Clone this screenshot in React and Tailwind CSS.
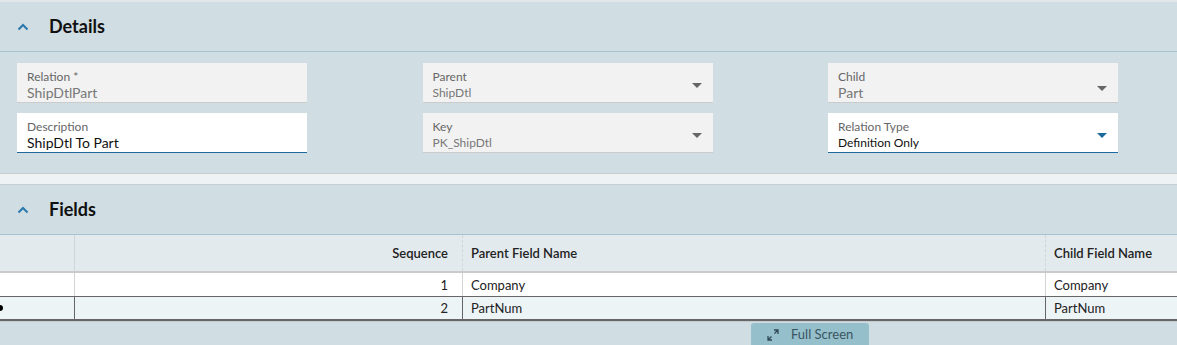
import React from "react";

const Chevron = () => (
  <svg width="12" height="8" viewBox="0 0 12 8" className="shrink-0">
    <path d="M1.5 6.5 L6 2 L10.5 6.5" fill="none" stroke="#2a78ad" strokeWidth="2" />
  </svg>
);

const Caret = ({ color }) => (
  <svg width="10" height="5" viewBox="0 0 10 5" className="shrink-0">
    <path d="M0 0 L10 0 L5 5 Z" fill={color} />
  </svg>
);

const Field = ({ label, value, enabled, dropdown, big, caretTop = "mt-[2px]" }) => (
  <div
    className={`h-[40px] w-[290px] flex items-center pl-[10px] pr-[10px] pt-[4px] ${
      enabled ? "bg-white border-b border-[#1f6a9c]" : "bg-[#f2f2f2] border-b border-[#cbcbcb]"
    }`}
  >
    <div className="flex-1 flex flex-col leading-none">
      <span className="text-[12px] text-[#666] leading-[15px]">{label}</span>
      <span className={`${big ? "text-[14px]" : "text-[12px]"} leading-[17px] ${enabled ? "text-[#111]" : "text-[#777]"}`}>
        {value}
      </span>
    </div>
    {dropdown && (
      <div className={`mr-[1px] ${caretTop}`}>
        <Caret color={enabled ? "#1b6a9b" : "#666"} />
      </div>
    )}
  </div>
);

const SectionHeader = ({ title }) => (
  <div className="h-[50px] flex items-center border-b border-[#a7c3d0]">
    <div className="w-[49px] pl-[17px] flex items-center">
      <Chevron />
    </div>
    <span className="text-[18px] font-bold text-[#111]">{title}</span>
  </div>
);

const ExpandIcon = () => (
  <svg width="12" height="12" viewBox="0 0 12 12" className="shrink-0">
    <path d="M7 1 H11 V5 M11 1 L7.5 4.5" fill="none" stroke="#2f4a55" strokeWidth="1.3" />
    <path d="M1 7 V11 H5 M1 11 L4.5 7.5" fill="none" stroke="#2f4a55" strokeWidth="1.3" />
  </svg>
);

export default function App() {
  return (
    <div
      className="w-[1177px] h-[345px] overflow-hidden bg-[#d0dde2] border-t-2 border-[#e2e6e8] text-[#333]"
      style={{ fontFamily: "Lato, 'Noto Sans', sans-serif" }}
    >
      <SectionHeader title="Details" />
      <div className="pl-[17px] pt-[11px] pb-[20px] grid grid-cols-[290px_290px_290px] gap-x-[115.5px] gap-y-[10px]">
        <Field label="Relation *" value="ShipDtlPart" big />
        <Field label="Parent" value="ShipDtl" dropdown />
        <Field label="Child" value="Part" dropdown big caretTop="mt-[8px]" />
        <Field label="Description" value="ShipDtl To Part" enabled big />
        <Field label="Key" value="PK_ShipDtl" dropdown />
        <Field label="Relation Type" value="Definition Only" enabled dropdown />
      </div>
      <div className="h-[12px] bg-[#eef2f4] border-y border-[#c6ced2]" />
      <SectionHeader title="Fields" />
      <div className="text-[13px]">
        <div className="grid grid-cols-[75px_388px_583px_1fr] h-[38px] bg-[#e3eaed] border-b-2 border-[#cacaca] font-semibold text-[#222]">
          <div className="border-r border-[#cfd6d9]" />
          <div className="border-r border-dashed border-[#cfd6d9] flex items-center justify-end pr-[14px] pt-[2px]">Sequence</div>
          <div className="border-r border-dashed border-[#cfd6d9] flex items-center pl-[8px] pt-[2px]">Parent Field Name</div>
          <div className="flex items-center pl-[8px] pt-[2px]">Child Field Name</div>
        </div>
        <div className="grid grid-cols-[75px_388px_583px_1fr] h-[24px] bg-white border-b border-[#666] text-[#222]">
          <div className="border-r border-[#d4d4d4]" />
          <div className="border-r border-[#d4d4d4] flex items-center justify-end pr-[14px] pt-[2px]">1</div>
          <div className="border-r border-[#d4d4d4] flex items-center pl-[8px] pt-[2px]">Company</div>
          <div className="flex items-center pl-[8px] pt-[2px]">Company</div>
        </div>
        <div className="grid grid-cols-[75px_388px_583px_1fr] h-[24px] bg-[#edf4f6] border-b-2 border-[#666] text-[#222]">
          <div className="border-r border-[#666] relative">
            <span className="absolute left-[-4px] top-[8px] w-[7px] h-[6px] bg-black rounded-full" />
          </div>
          <div className="border-r border-[#666] flex items-center justify-end pr-[14px] pt-[1px]">2</div>
          <div className="border-r border-[#666] flex items-center pl-[8px] pt-[1px]">PartNum</div>
          <div className="flex items-center pl-[8px] pt-[1px]">PartNum</div>
        </div>
        <div className="h-[1px] bg-[#c4cacd]" />
      </div>
      <div className="pl-[751px] pt-[1px]">
        <div className="w-[118px] h-[24px] rounded-t-[3px] bg-[#96bfcc] flex items-center pl-[16px] gap-[12px] text-[13px] text-[#3a5561]">
          <ExpandIcon />
          <span>Full Screen</span>
        </div>
      </div>
    </div>
  );
}
